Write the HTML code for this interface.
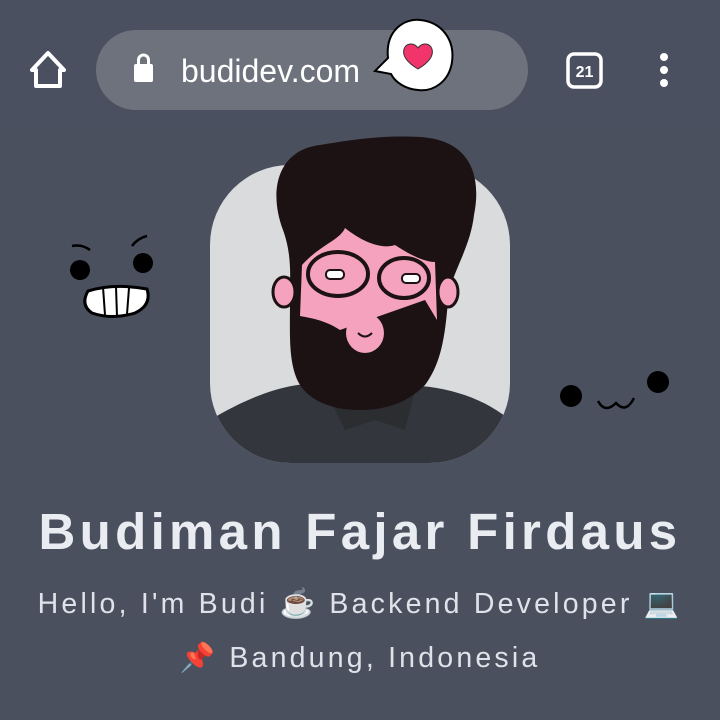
<!DOCTYPE html>
<html><head><meta charset="utf-8"><style>
html,body{margin:0;padding:0;width:720px;height:720px;overflow:hidden;background:#4a505e;font-family:"Liberation Sans",sans-serif}
.bar{position:absolute;left:0;top:0;width:720px;height:126px;background:#4b5060}
.pill{position:absolute;left:96px;top:30px;width:432px;height:80px;border-radius:40px;background:#6e727c}
.url{position:absolute;left:181px;top:53px;font-size:32px;color:#fff;letter-spacing:0px}
.t{position:absolute;left:0;width:720px;text-align:center;color:#e9ecf1;white-space:nowrap}
.h1{top:502px;font-size:51px;font-weight:bold;letter-spacing:4.3px}
.s{font-size:28.5px;letter-spacing:3.2px;color:#dfe2e8}
</style></head><body>
<div class="bar"></div>
<div class="pill"></div>
<div class="url">budidev.com</div>
<svg width="720" height="720" style="position:absolute;left:0;top:0">
 <path d="M48 53 L32 70 L36 70 L36 86 L60 86 L60 70 L64 70 Z" fill="none" stroke="#fff" stroke-width="4" stroke-linejoin="round"/>
 <rect x="134" y="64" width="19" height="18" rx="2" fill="#fff"/>
 <path d="M138.5 65 v-5 a5 5 0 0 1 10 0 v5" fill="none" stroke="#fff" stroke-width="3"/>
 <path d="M388 58 C385 30 405 18 420 20 C442 22 455 40 452 62 C449 82 433 92 418 90 C405 89 395 82 391 74 L375 71 Z" fill="#fff" stroke="#000" stroke-width="2"/>
 <path d="M418 69 C408 63 402 56 404 49 C406 43 414 42 418 48 C422 42 430 43 432 49 C434 56 428 63 418 69 Z" fill="#f1346a" stroke="#333" stroke-width="1"/>
 <rect x="568" y="54" width="33" height="33" rx="6" fill="none" stroke="#fff" stroke-width="3.5"/>
 <text x="584.5" y="77" font-size="16" font-weight="bold" fill="#fff" text-anchor="middle" font-family="Liberation Sans">21</text>
 <circle cx="664" cy="57" r="4" fill="#fff"/><circle cx="664" cy="70" r="4" fill="#fff"/><circle cx="664" cy="83" r="4" fill="#fff"/>
 <defs><clipPath id="c"><rect x="210" y="165" width="300" height="298" rx="80"/></clipPath></defs>
 <rect x="210" y="165" width="300" height="298" rx="80" fill="#d9dbdc"/>
 <g clip-path="url(#c)">
  <path d="M210 420 C260 390 300 380 330 385 L400 385 C440 385 480 395 510 420 L510 463 L210 463 Z" fill="#33373d"/>
  <path d="M325 390 L345 430 L375 420 L405 430 L415 390 Z" fill="#2b2d31"/>
 </g>
 <path d="M283 230 C268 190 278 150 320 145 C350 140 380 135 420 137 C470 140 482 175 474 215 C470 250 450 275 448 300 C445 340 440 365 425 385 C410 400 390 410 360 410 C330 410 310 400 300 385 C288 365 290 335 290 300 C290 275 292 255 283 230 Z" fill="#1c1213"/>
 <path d="M302 265 C320 245 340 240 345 228 C360 240 380 250 395 245 C410 255 425 262 435 262 L437 320 L425 300 L340 330 C325 320 310 318 300 316 Z" fill="#f4a2bd"/>
 <ellipse cx="284" cy="292" rx="11" ry="15" fill="#f4a2bd" stroke="#1c1213" stroke-width="3"/>
 <ellipse cx="448" cy="292" rx="10" ry="15" fill="#f4a2bd" stroke="#1c1213" stroke-width="3"/>
 <ellipse cx="338" cy="274" rx="30" ry="22" fill="none" stroke="#1c1213" stroke-width="4"/>
 <ellipse cx="404" cy="278" rx="25" ry="20" fill="none" stroke="#1c1213" stroke-width="4"/>
 <rect x="326" y="270" width="18" height="9" rx="4" fill="#fff" stroke="#1c1213" stroke-width="2"/>
 <rect x="402" y="274" width="18" height="9" rx="4" fill="#fff" stroke="#1c1213" stroke-width="2"/>
 <ellipse cx="365" cy="333" rx="19" ry="20" fill="#f4a2bd"/>
 <path d="M358 333 Q365 340 372 333" stroke="#1c1213" stroke-width="2" fill="none"/>
 <path d="M72 246 Q82 244 90 250 M132 246 Q138 238 147 236" stroke="#000" stroke-width="2.5" fill="none"/>
 <circle cx="80" cy="270" r="10" fill="#000"/><circle cx="143" cy="263" r="10" fill="#000"/>
 <path d="M88 291 Q115 283 147 289 Q152 305 135 313 Q112 320 92 313 Q80 305 88 291 Z" fill="#fff" stroke="#000" stroke-width="3"/>
 <path d="M103 287 L105 315 M116 287 L117 316 M129 288 L127 314" stroke="#000" stroke-width="2"/>
 <circle cx="571" cy="396" r="11" fill="#000"/><circle cx="658" cy="382" r="11" fill="#000"/>
 <path d="M598 401 Q605 414 616 403 Q626 414 634 398" stroke="#000" stroke-width="2.5" fill="none"/>
</svg>
<div class="t h1">Budiman Fajar Firdaus</div>
<div class="t s" style="top:587px">Hello, I'm Budi ☕ Backend Developer 💻</div>
<div class="t s" style="top:641px">📌 Bandung, Indonesia</div>
</body></html>
